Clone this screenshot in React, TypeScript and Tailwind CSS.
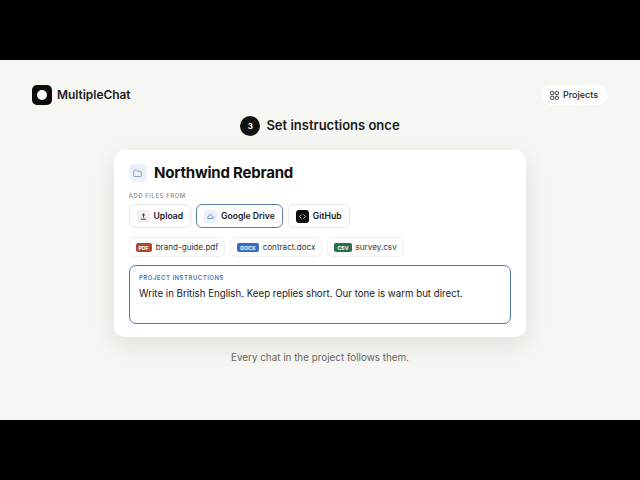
import { Folder, Code } from "lucide-react";

const font = "font-['Inter',sans-serif]";

function Source({ label, active, icon }: { label: string; active?: boolean; icon: React.ReactNode }) {
  return (
    <div
      className={`h-6 flex items-center gap-[4px] rounded-[6px] bg-white px-[7px] text-[8.6px] font-semibold text-[#1a1a1a] border ${
        active ? "border-[#5c80ab]" : "border-[#e9e9e5]"
      }`}
    >
      {icon}
      {label}
    </div>
  );
}

function FileChip({ tag, color, name }: { tag: string; color: string; name: string }) {
  return (
    <div className="h-5 flex items-center gap-[4px] rounded-[6px] bg-white border border-[#efefeb] px-[6px] text-[8.1px] text-[#333]">
      <span className={`h-[9px] block rounded-[2px] px-[3px] text-[5.2px] leading-[11px] overflow-hidden font-bold text-white ${color}`}>{tag}</span>
      {name}
    </div>
  );
}

export default function App() {
  return (
    <div className={`w-[640px] h-[480px] flex flex-col bg-black ${font}`}>
      <div className="h-[60px] shrink-0" />
      <main className="h-[360px] bg-[#f6f6f2] flex flex-col items-center relative">
        <header className="w-full flex items-center justify-between pl-8 pr-[33px] pt-[25px]">
          <div className="flex items-center gap-[5px]">
            <div className="w-5 h-5 rounded-[5px] bg-[#0c0c0c] flex items-center justify-center">
              <div className="w-[10px] h-[10px] rounded-full bg-white" />
            </div>
            <span className="text-[11.9px] font-semibold text-[#1a1a1a]">MultipleChat</span>
          </div>
          <div className="h-5 flex items-center gap-[4px] rounded-full bg-white px-[9px] text-[9px] font-medium text-[#222]">
            <svg width="9" height="9" viewBox="0 0 9 9" fill="none" stroke="#1a1a1a" strokeWidth="0.9">
              <rect x="0.6" y="0.6" width="3.1" height="3.1" rx="1" />
              <rect x="5.3" y="0.6" width="3.1" height="3.1" rx="1" />
              <rect x="0.6" y="5.3" width="3.1" height="3.1" rx="1" />
              <rect x="5.3" y="5.3" width="3.1" height="3.1" rx="1" />
            </svg>
            Projects
          </div>
        </header>

        <div className="flex items-center gap-[6px] mt-[11px]">
          <div className="w-5 h-5 rounded-full bg-[#111] flex items-center justify-center text-[8px] font-bold text-white">3</div>
          <span className="text-[13px] font-semibold text-[#1a1a1a]">Set instructions once</span>
        </div>

        <section className="w-[412px] h-[187px] mt-[14px] rounded-[10px] bg-white pl-[14.5px] pr-[15px] pt-[14px] shadow-[0_8px_24px_rgba(40,40,30,0.1)]">
          <div className="flex items-center gap-[7.5px]">
            <div className="w-[18px] h-[18px] rounded-[5px] bg-[#e9f1fa] flex items-center justify-center text-[#4a6a94]">
              <Folder size={9} strokeWidth={1.5} />
            </div>
            <h1 className="text-[15px] leading-[18px] font-bold tracking-[-0.2px] text-[#111]">Northwind Rebrand</h1>
          </div>
          <div className="mt-[10px] text-[6px] leading-[8px] font-medium tracking-[0.55px] text-[#8a8a85]">ADD FILES FROM</div>
          <div className="flex gap-[5px] mt-[4px]">
            <Source
              label="Upload"
              icon={
                <span className="w-[13px] h-[13px] rounded-[3px] bg-[#f1f1ee] flex items-center justify-center">
                  <svg width="7" height="7" viewBox="0 0 7 7" fill="none" stroke="#1a1a1a" strokeWidth="0.8">
                    <path d="M3.5 4.6V0.9M2 2.3l1.5-1.4L5 2.3M0.8 6.2h5.4" />
                  </svg>
                </span>
              }
            />
            <Source
              active
              label="Google Drive"
              icon={
                <span className="w-[13px] h-[13px] rounded-[3px] bg-[#e9f1fa] flex items-center justify-center">
                  <svg width="7" height="5" viewBox="0 0 7 5" fill="none" stroke="#4f77a8" strokeWidth="0.8">
                    <path d="M1 4.4h5a.6.6 0 0 0 .4-1L4.6 1.1a1.4 1.4 0 0 0-2.2 0L.6 3.4a.6.6 0 0 0 .4 1z" />
                  </svg>
                </span>
              }
            />
            <Source
              label="GitHub"
              icon={
                <span className="w-[13px] h-[13px] rounded-[3px] bg-[#0c0c0c] flex items-center justify-center text-white">
                  <Code size={7} strokeWidth={2.5} />
                </span>
              }
            />
          </div>
          <div className="flex gap-[5px] mt-[9px]">
            <FileChip tag="PDF" color="bg-[#b0492c]" name="brand-guide.pdf" />
            <FileChip tag="DOCX" color="bg-[#3b6cc0]" name="contract.docx" />
            <FileChip tag="CSV" color="bg-[#26704f]" name="survey.csv" />
          </div>
          <div className="h-[59px] mt-[8px] ml-[0.5px] rounded-[7px] border border-[#4f77a8] px-[9px] pt-[8px]">
            <div className="text-[6px] leading-[8px] font-semibold tracking-[0.5px] text-[#4f77a8]">PROJECT INSTRUCTIONS</div>
            <p className="mt-[4px] text-[9.7px] leading-[16px] text-[#1a1a1a]">
              Write in British English. Keep replies short. Our tone is warm but direct.
            </p>
          </div>
        </section>

        <p className="mt-[13px] text-[9.85px] leading-[14px] text-[#666661]">Every chat in the project follows them.</p>
      </main>
      <div className="h-[60px] shrink-0" />
    </div>
  );
}
